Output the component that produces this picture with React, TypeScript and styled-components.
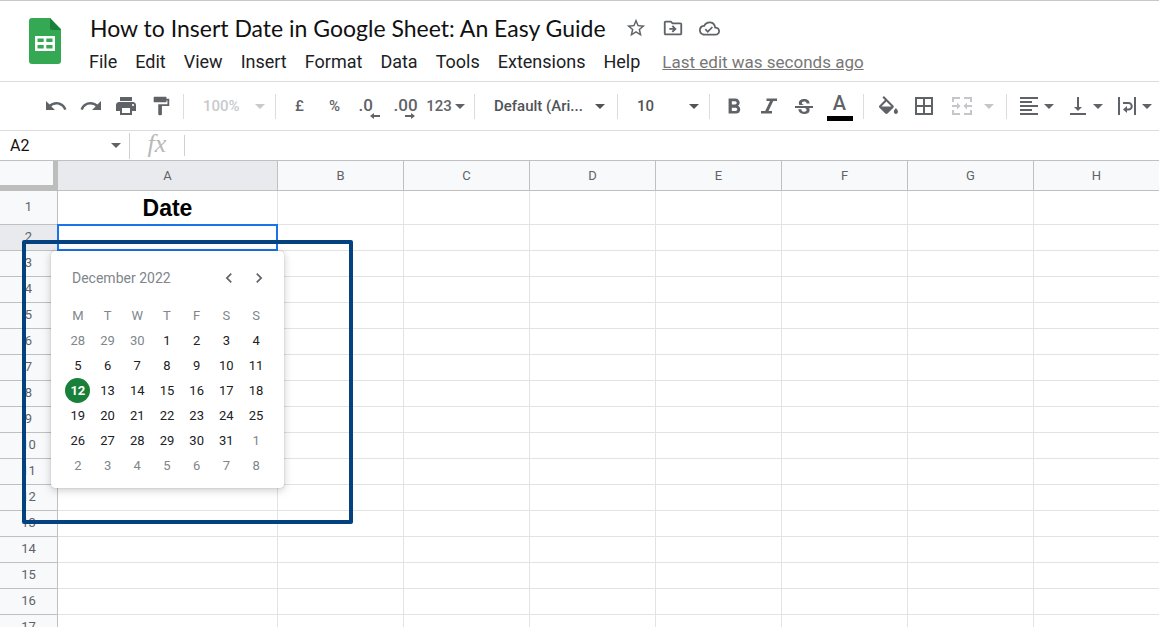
import React from 'react';
import styled, { createGlobalStyle, css } from 'styled-components';
import {
  MdBorderAll,
  MdChevronLeft,
  MdChevronRight,
  MdFormatAlignLeft,
  MdFormatBold,
  MdFormatColorFill,
  MdFormatPaint,
  MdOutlineCloudDone,
  MdOutlineDriveFileMove,
  MdPrint,
  MdRedo,
  MdStarOutline,
  MdStrikethroughS,
  MdUndo,
  MdVerticalAlignBottom,
} from 'react-icons/md';

const GlobalStyle = createGlobalStyle`
  *, *::before, *::after { box-sizing: border-box; }
  body {
    margin: 0;
    background: #fff;
    color: #202124;
    font-family: Roboto, sans-serif;
  }
  button, input, select { font: inherit; color: inherit; }
  button { padding: 0; border: 0; background: none; cursor: pointer; }
  svg { display: block; flex: none; }
`;

const Page = styled.div`
  display: flex;
  flex-direction: column;
  height: 100vh;
  overflow: hidden;
  border-top: 1px solid #c8c8c8;
`;

const Header = styled.header`
  display: flex;
  flex: none;
  gap: 27px;
  height: 81px;
  padding: 17px 0 0 29px;
  border-bottom: 1px solid #dadce0;
`;

const HeaderText = styled.div`
  min-width: 0;
  white-space: nowrap;
`;

const TitleRow = styled.div`
  display: flex;
  align-items: center;
  gap: 15px;
  height: 28px;
  margin-top: -4px;
  color: #5f6368;
`;

const Title = styled.h1`
  margin: 0 4px 0 1px;
  font: 400 23px/28px Lato, sans-serif;
  color: #111;
`;

const MenuBar = styled.nav`
  display: flex;
  align-items: center;
  gap: 18px;
  height: 28px;
  margin-top: 6px;
  font-size: 18px;
  line-height: 28px;
`;

const LastEdit = styled.a`
  margin-left: 4px;
  color: #777;
  font-size: 17px;
  text-decoration: underline;
`;

const Toolbar = styled.div`
  display: flex;
  flex: none;
  align-items: center;
  height: 49px;
  padding-left: 38px;
  border-bottom: 1px solid #dadce0;
  color: #5f6368;
  font-size: 15px;
  font-weight: 500;
`;

const ToolButton = styled.button<{ $width?: number; $muted?: boolean }>`
  display: flex;
  flex: none;
  align-items: center;
  justify-content: center;
  gap: 3px;
  width: ${(p) => p.$width ?? 35}px;
  height: 34px;
  color: ${(p) => (p.$muted ? '#c4c6c9' : '#5f6368')};
`;

const Divider = styled.span<{ $wide?: boolean }>`
  flex: none;
  width: 1px;
  height: 25px;
  margin: ${(p) => (p.$wide ? '0 4px 0 9px' : '0 6px 0 5px')};
  background: #dadce0;
`;

const SelectBox = styled.label<{ $width: number; $end?: number; $muted?: boolean }>`
  display: flex;
  flex: none;
  align-items: center;
  width: ${(p) => p.$width}px;
  padding-right: ${(p) => p.$end ?? 5}px;
  color: ${(p) => (p.$muted ? '#c8cacd' : '#505357')};
  select {
    flex: 1;
    min-width: 0;
    height: 30px;
    padding: 0 0 0 13px;
    border: 0;
    background: none;
    appearance: none;
  }
`;

const DecimalIcon = styled.span`
  display: flex;
  flex-direction: column;
  align-items: flex-start;
  width: 22px;
  padding-top: 4px;
  font-size: 17px;
  line-height: 16px;
  svg { margin-left: 11px; }
`;

const TextColor = styled.span`
  display: flex;
  flex-direction: column;
  align-items: center;
  width: 26px;
  padding: 2px 0 4px;
  border-bottom: 5px solid #000;
  font-size: 20px;
  line-height: 18px;
`;

const FormulaBar = styled.div`
  display: flex;
  flex: none;
  align-items: center;
  height: 29px;
  color: #111;
`;

const NameBox = styled.label`
  display: flex;
  align-items: center;
  width: 129px;
  padding: 0 8px 0 10px;
  color: #5f6368;
  input {
    flex: 1;
    min-width: 0;
    padding: 0;
    border: 0;
    outline: 0;
    color: #111;
    font-size: 16px;
  }
`;

const BarLine = styled.span<{ $height: number }>`
  width: 1px;
  height: ${(p) => p.$height}px;
  background: #cfd1d4;
`;

const Fx = styled.span`
  width: 54px;
  padding-bottom: 4px;
  color: #b9b9b9;
  font: italic 26px/24px 'Liberation Serif', serif;
  text-align: center;
`;

const FormulaInput = styled.input`
  flex: 1;
  min-width: 0;
  border: 0;
  outline: 0;
  background: none;
`;

const Sheet = styled.main`
  position: relative;
  flex: 1;
  min-height: 0;
  overflow: hidden;
  border-top: 1px solid #c0c0c0;
`;

const Grid = styled.table`
  width: 100%;
  min-width: 1160px;
  border-collapse: separate;
  border-spacing: 0;
  table-layout: fixed;
`;

const headCell = css<{ $active?: boolean }>`
  border: solid #c0c0c0;
  border-width: 0 1px 1px 0;
  background: ${(p) => (p.$active ? '#e8eaed' : '#f8f9fa')};
  color: #5f6368;
  font-size: 13px;
  font-weight: 400;
  line-height: 16px;
`;

const ColumnHead = styled.th<{ $active?: boolean }>`
  ${headCell}
  height: 30px;
  padding: 0;
`;

const RowHead = styled.th<{ $active?: boolean }>`
  ${headCell}
  padding: 0 0 2px;
`;

const Corner = styled.td`
  height: 30px;
  padding: 0;
  border: solid #bdbdbd;
  border-width: 0 5px 6px 0;
  background: #f8f9fa;
`;

const Row = styled.tr<{ $tall?: boolean }>`
  height: ${(p) => (p.$tall ? 34 : 26)}px;
`;

const Cell = styled.td`
  padding: 0 0 2px;
  border: solid #e2e3e3;
  border-width: 0 1px 1px 0;
  color: #000;
  font: 700 23px/28px 'Liberation Sans', Arial, sans-serif;
  text-align: center;
  vertical-align: bottom;
`;

const ActiveCell = styled(Cell)`
  position: relative;
`;

const Selection = styled.div`
  position: absolute;
  inset: -1px;
  border: 2px solid #1a73e8;
`;

const Popup = styled.section`
  position: absolute;
  z-index: 1;
  top: 100%;
  left: -7px;
  width: 233px;
  margin-top: 1px;
  padding: 0 13px 10px 12px;
  border-radius: 4px;
  background: #fff;
  box-shadow: 0 0 1px rgba(0, 0, 0, 0.35), 0 2px 8px rgba(0, 0, 0, 0.22);
  color: #202124;
  font: 400 13px/25px Roboto, sans-serif;
`;

const MonthBar = styled.div`
  display: flex;
  align-items: center;
  height: 52px;
  margin-right: -3px;
  padding: 2px 0 0 9px;
  color: #80868b;
  font-size: 14px;
`;

const MonthName = styled.span`
  flex: 1;
  text-align: left;
`;

const MonthButton = styled.button`
  display: flex;
  align-items: center;
  justify-content: center;
  width: 30px;
  height: 30px;
  color: #5f6368;
`;

const Days = styled.table`
  width: 100%;
  border-spacing: 0;
  table-layout: fixed;
  th { color: #80868b; font-weight: 400; }
  td, th { height: 25px; padding: 0; }
`;

const Day = styled.button<{ $outside: boolean; $today: boolean }>`
  display: block;
  width: 25px;
  height: 25px;
  margin: 0 auto;
  border-radius: 50%;
  line-height: 25px;
  color: ${(p) => (p.$outside ? '#80868b' : '#202124')};
  ${(p) =>
    p.$today &&
    css`
      background: #188038;
      color: #fff;
      font-weight: 700;
    `}
`;

const Highlight = styled.div`
  position: absolute;
  z-index: 2;
  top: 79px;
  left: 22px;
  width: 331px;
  height: 284px;
  border: 4px solid #04427f;
  border-radius: 2px;
  pointer-events: none;
`;

const Caret = () => (
  <svg width="10" height="5" viewBox="0 0 10 5" fill="currentColor" aria-hidden="true">
    <path d="M0 0h10L5 5z" />
  </svg>
);

const SheetsLogo = () => (
  <svg width="33" height="46" viewBox="0 0 33 46" aria-hidden="true">
    <path d="M3 0h18l11 11v32a3 3 0 0 1-3 3H3a3 3 0 0 1-3-3V3a3 3 0 0 1 3-3z" fill="#34a853" />
    <path d="M21 0l11 12H23a2 2 0 0 1-2-2z" fill="#188038" />
    <path
      d="M6 18h20v15H6zM8.500 20.500v3.500h6.200v-3.500zM17.300 20.500v3.500h6.200v-3.500zM8.500 27v3.500h6.200V27zM17.300 27v3.500h6.200V27z"
      fill="#fff"
      fillRule="evenodd"
    />
  </svg>
);

const DecimalArrow = ({ right }: { right?: boolean }) => (
  <svg width="10" height="6" viewBox="0 0 10 6" fill="currentColor" aria-hidden="true">
    <path d={right ? 'M0 2h6V0l4 3-4 3V4H0z' : 'M10 2H4V0L0 3l4 3V4h6z'} />
  </svg>
);

const ItalicIcon = () => (
  <svg width="16" height="16" viewBox="0 0 16 16" fill="currentColor" aria-hidden="true">
    <path d="M5.500 0.500H16V3h-3.700L7.500 13H11v2.500H0V13h4.200L9 3H5.500z" />
  </svg>
);

const MergeIcon = () => (
  <svg width="20" height="18" viewBox="0 0 20 18" fill="currentColor" aria-hidden="true">
    <path d="M0 0h8v2H2v3H0zM12 0h8v5h-2V2h-6zM0 13h2v3h6v2H0zM18 13h2v5h-8v-2h6zM0 8h5V5.500L8.500 9 5 12.500V10H0zM20 8h-5V5.500L11.500 9l3.500 3.500V10h5z" />
  </svg>
);

const WrapIcon = () => (
  <svg width="24" height="18" viewBox="-3 0 24 18" aria-hidden="true">
    <path d="M1 0v18M17 0v18M5 6h5.500a3.200 3.200 0 0 1 0 6.500H8" fill="none" stroke="currentColor" strokeWidth="2" />
    <path d="M9 9v7l-4-3.500z" fill="currentColor" />
  </svg>
);

const menus = ['File', 'Edit', 'View', 'Insert', 'Format', 'Data', 'Tools', 'Extensions', 'Help'];
const columns = ['A', 'B', 'C', 'D', 'E', 'F', 'G', 'H'];
const rows = Array.from({ length: 17 }, (_, i) => i + 1);
const weekdays = ['M', 'T', 'W', 'T', 'F', 'S', 'S'];

// Six weeks starting on Monday 28 November 2022.
const weeks = Array.from({ length: 6 }, (_, week) =>
  Array.from({ length: 7 }, (_, day) => {
    const date = new Date(2022, 10, 28 + week * 7 + day);
    return { number: date.getDate(), outside: date.getMonth() !== 11 };
  }),
);

const Calendar = () => (
  <Popup aria-label="Date picker">
    <MonthBar>
      <MonthName>December 2022</MonthName>
      <MonthButton aria-label="Previous month"><MdChevronLeft size={20} /></MonthButton>
      <MonthButton aria-label="Next month"><MdChevronRight size={20} /></MonthButton>
    </MonthBar>
    <Days>
      <thead>
        <tr>{weekdays.map((name, i) => <th key={i} scope="col">{name}</th>)}</tr>
      </thead>
      <tbody>
        {weeks.map((week, i) => (
          <tr key={i}>
            {week.map(({ number, outside }) => (
              <td key={number}>
                <Day $outside={outside} $today={!outside && number === 12}>{number}</Day>
              </td>
            ))}
          </tr>
        ))}
      </tbody>
    </Days>
  </Popup>
);

export default function App() {
  return (
    <>
      <GlobalStyle />
      <Page>
        <Header>
          <SheetsLogo />
          <HeaderText>
            <TitleRow>
              <Title>How to Insert Date in Google Sheet: An Easy Guide</Title>
              <button aria-label="Star"><MdStarOutline size={22} /></button>
              <button aria-label="Move"><MdOutlineDriveFileMove size={22} /></button>
              <button aria-label="Document status"><MdOutlineCloudDone size={21} /></button>
            </TitleRow>
            <MenuBar>
              {menus.map((name) => <button key={name}>{name}</button>)}
              <LastEdit href="#history">Last edit was seconds ago</LastEdit>
            </MenuBar>
          </HeaderText>
        </Header>

        <Toolbar role="toolbar" aria-label="Main">
          <ToolButton aria-label="Undo"><MdUndo size={24} /></ToolButton>
          <ToolButton aria-label="Redo"><MdRedo size={24} /></ToolButton>
          <ToolButton aria-label="Print"><MdPrint size={24} /></ToolButton>
          <ToolButton aria-label="Paint format"><MdFormatPaint size={22} /></ToolButton>
          <Divider />
          <SelectBox $width={80} $muted>
            <select aria-label="Zoom" defaultValue="100%"><option>100%</option></select>
            <Caret />
          </SelectBox>
          <Divider />
          <ToolButton>£</ToolButton>
          <ToolButton>%</ToolButton>
          <ToolButton aria-label="Decrease decimal places">
            <DecimalIcon>.0<DecimalArrow /></DecimalIcon>
          </ToolButton>
          <ToolButton aria-label="Increase decimal places">
            <DecimalIcon>.00<DecimalArrow right /></DecimalIcon>
          </ToolButton>
          <ToolButton $width={47}>123<Caret /></ToolButton>
          <Divider />
          <SelectBox $width={131} $end={7}>
            <select aria-label="Font" defaultValue="Default (Ari..."><option>Default (Ari...</option></select>
            <Caret />
          </SelectBox>
          <Divider />
          <SelectBox $width={80}>
            <select aria-label="Font size" defaultValue="10"><option>10</option></select>
            <Caret />
          </SelectBox>
          <Divider />
          <ToolButton aria-label="Bold"><MdFormatBold size={26} viewBox="0 -1 24 24" /></ToolButton>
          <ToolButton aria-label="Italic"><ItalicIcon /></ToolButton>
          <ToolButton aria-label="Strikethrough"><MdStrikethroughS size={24} viewBox="0 -2 24 24" /></ToolButton>
          <ToolButton $width={37} aria-label="Text colour"><TextColor>A</TextColor></ToolButton>
          <Divider />
          <ToolButton aria-label="Fill colour"><MdFormatColorFill size={20} viewBox="2 0 19 19" /></ToolButton>
          <ToolButton $width={38} aria-label="Borders"><MdBorderAll size={24} /></ToolButton>
          <ToolButton $width={38} $muted aria-label="Merge cells"><MergeIcon /></ToolButton>
          <ToolButton $width={16} $muted aria-label="Merge options"><Caret /></ToolButton>
          <Divider $wide />
          <ToolButton $width={49} aria-label="Horizontal align"><MdFormatAlignLeft size={24} /><Caret /></ToolButton>
          <ToolButton $width={49} aria-label="Vertical align"><MdVerticalAlignBottom size={24} /><Caret /></ToolButton>
          <ToolButton $width={49} aria-label="Text wrapping"><WrapIcon /><Caret /></ToolButton>
        </Toolbar>

        <FormulaBar>
          <NameBox>
            <input aria-label="Name box" defaultValue="A2" />
            <Caret />
          </NameBox>
          <BarLine $height={26} />
          <Fx>fx</Fx>
          <BarLine $height={21} />
          <FormulaInput aria-label="Formula" />
        </FormulaBar>

        <Sheet>
          <Grid>
            <colgroup>
              <col width={58} />
              <col width={220} />
              {columns.slice(1).map((name) => <col key={name} />)}
            </colgroup>
            <thead>
              <tr>
                <Corner />
                {columns.map((name) => (
                  <ColumnHead key={name} scope="col" $active={name === 'A'}>{name}</ColumnHead>
                ))}
              </tr>
            </thead>
            <tbody>
              {rows.map((row) => (
                <Row key={row} $tall={row === 1}>
                  <RowHead scope="row" $active={row === 2}>{row}</RowHead>
                  {columns.map((name) => {
                    if (name === 'A' && row === 2) {
                      return (
                        <ActiveCell key={name}>
                          <Selection />
                          <Calendar />
                        </ActiveCell>
                      );
                    }
                    return <Cell key={name}>{name === 'A' && row === 1 ? 'Date' : null}</Cell>;
                  })}
                </Row>
              ))}
            </tbody>
          </Grid>
          <Highlight />
        </Sheet>
      </Page>
    </>
  );
}
